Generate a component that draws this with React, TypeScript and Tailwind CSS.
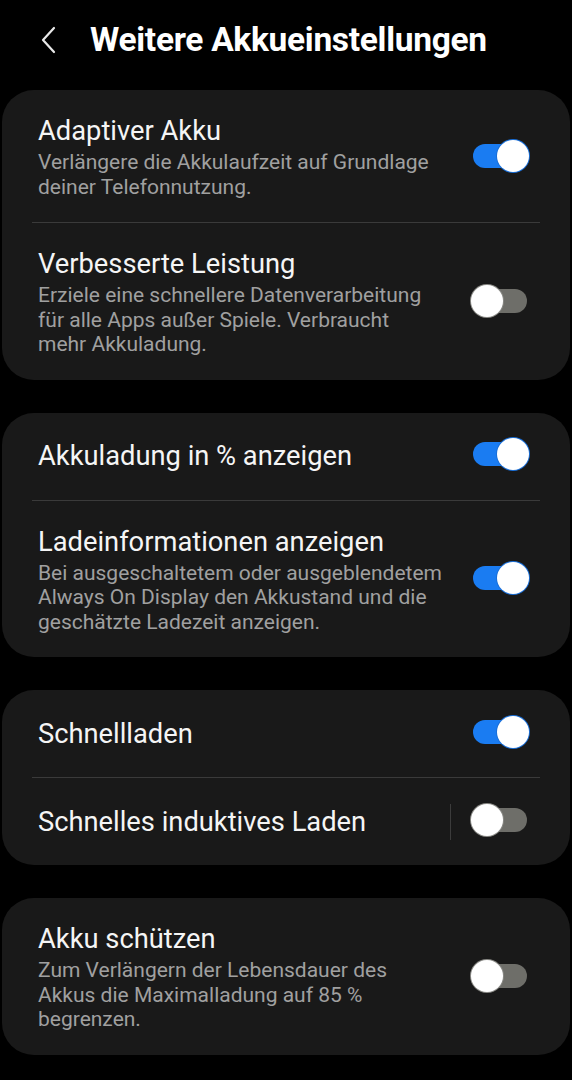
import React from "react";

function Toggle({ on }: { on: boolean }) {
  return (
    <div className="relative w-[58px] h-[32px] shrink-0 -translate-y-[2px]">
      <div
        className={
          "absolute left-[2px] right-[2px] top-[4px] h-[24px] rounded-full " +
          (on ? "bg-[#1a7cf2]" : "bg-[#6e6e69]")
        }
      />
      <div
        className={
          "absolute top-0 w-[32px] h-[32px] rounded-full bg-white " +
          (on ? "right-0 ring-1 ring-[#1a6fd8]" : "left-0 ring-1 ring-[#8a8a86]")
        }
      />
    </div>
  );
}

function Row({
  title,
  sub,
  on,
  divider,
  sep,
}: {
  title: string;
  sub?: string[];
  on: boolean;
  divider?: boolean;
  sep?: boolean;
}) {
  return (
    <div>
      {divider && <div className="mx-[30px] h-px bg-[#3a3a3a]" />}
      <div
        className={
          "flex items-center pl-[36px] pr-[41px] " +
          (sub ? "pt-[26px] pb-[23px]" : "h-[87px]")
        }
      >
        <div className="flex-1 min-w-0">
          <div className="text-[27.3px] leading-[30px] text-[#f5f5f5]">{title}</div>
          {sub && (
            <div className="mt-[4px] text-[21px] leading-[24.5px] text-[#a0a0a0]">
              {sub.map((l, i) => (
                <div key={i} className="whitespace-nowrap">{l}</div>
              ))}
            </div>
          )}
        </div>
        {sep && <div className="w-px h-[36px] bg-[#3c3c3c] mr-[20px]" />}
        <Toggle on={on} />
      </div>
    </div>
  );
}

function Card({ children }: { children: React.ReactNode }) {
  return <div className="mx-[2px] rounded-[32px] bg-[#191919]">{children}</div>;
}

export default function App() {
  return (
    <div
      className="w-[572px] h-[1080px] bg-black overflow-hidden"
      style={{ fontFamily: "Roboto, 'Noto Sans', sans-serif" }}
    >
      <div className="flex items-center h-[90px] pb-[10px]">
        <svg width="18" height="28" viewBox="0 0 18 28" className="ml-[40px] mr-[32px]">
          <path d="M14 2 L3 14 L14 26" fill="none" stroke="#e8e8e8" strokeWidth="2.2" strokeLinecap="round" strokeLinejoin="round" />
        </svg>
        <div className="text-[33.5px] font-bold text-white tracking-[-0.3px]">Weitere Akkueinstellungen</div>
      </div>
      <div className="flex flex-col gap-[33px]">
        <Card>
          <Row
            title="Adaptiver Akku"
            sub={["Verlängere die Akkulaufzeit auf Grundlage", "deiner Telefonnutzung."]}
            on
          />
          <Row
            title="Verbesserte Leistung"
            sub={[
              "Erziele eine schnellere Datenverarbeitung",
              "für alle Apps außer Spiele. Verbraucht",
              "mehr Akkuladung.",
            ]}
            on={false}
            divider
          />
        </Card>
        <Card>
          <Row title="Akkuladung in % anzeigen" on />
          <Row
            title="Ladeinformationen anzeigen"
            sub={[
              "Bei ausgeschaltetem oder ausgeblendetem",
              "Always On Display den Akkustand und die",
              "geschätzte Ladezeit anzeigen.",
            ]}
            on
            divider
          />
        </Card>
        <Card>
          <Row title="Schnellladen" on />
          <Row title="Schnelles induktives Laden" on={false} divider sep />
        </Card>
        <Card>
          <Row
            title="Akku schützen"
            sub={[
              "Zum Verlängern der Lebensdauer des",
              "Akkus die Maximalladung auf 85 %",
              "begrenzen.",
            ]}
            on={false}
          />
        </Card>
      </div>
    </div>
  );
}
